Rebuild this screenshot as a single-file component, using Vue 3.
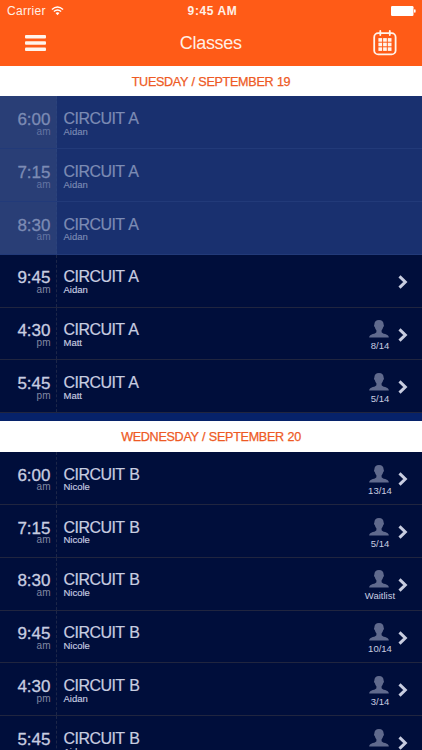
<template>
  <div class="screen">
    <header class="topbar">
      <div class="status">
        <div class="carrier">
          <span>Carrier</span>
          <svg class="wifi" viewBox="0 0 14 10" width="13" height="9.5">
            <path d="M1 3.6 Q7 -1.6 13 3.6" />
            <path d="M3.1 5.9 Q7 2.4 10.9 5.9" />
            <path class="dot" d="M4.9 7.5 Q7 5.7 9.1 7.5 L7 9.8 Z" />
          </svg>
        </div>
        <span class="clock">9:45 AM</span>
        <svg class="battery" viewBox="0 0 25 10" width="25" height="10">
          <rect x="0" y="0" width="22.5" height="10" rx="1.2" />
          <rect x="23" y="3.2" width="1.6" height="3.6" rx="0.8" />
        </svg>
      </div>
      <nav class="nav">
        <button class="icon-button" aria-label="Menu">
          <svg viewBox="0 0 21 16" width="21" height="16">
            <rect y="0" width="21" height="3.5" rx="1" />
            <rect y="6.2" width="21" height="3.5" rx="1" />
            <rect y="12.4" width="21" height="3.5" rx="1" />
          </svg>
        </button>
        <h1 class="title">Classes</h1>
        <button class="icon-button" aria-label="Calendar">
          <svg viewBox="0 0 24 26" width="24" height="26">
            <rect class="frame" x="1.2" y="3.2" width="21.4" height="21.2" rx="4" />
            <path class="pin" d="M7.3 0.9V5M16.8 0.9V5" />
            <template v-for="r in 3" :key="r">
              <rect
                v-for="c in 3"
                :key="c"
                :x="5.4 + (c - 1) * 4.7"
                :y="8.1 + (r - 1) * 4.6"
                width="3.7"
                height="3.6"
              />
            </template>
          </svg>
        </button>
      </nav>
    </header>

    <section v-for="day in days" :key="day.label" class="day">
      <h2 class="day-label">{{ day.label }}</h2>
      <div
        v-for="item in day.classes"
        :key="item.time"
        class="row"
        :class="{ past: item.past }"
      >
        <div class="when">
          <span class="time">{{ item.time }}</span>
          <span class="period">{{ item.period }}</span>
        </div>
        <div class="info">
          <span class="name">{{ item.name }}</span>
          <span class="coach">{{ item.coach }}</span>
        </div>
        <div v-if="item.spots" class="spots">
          <svg viewBox="0 0 20 18" width="20" height="18">
            <path
              d="M10 0C7 0 5.2 1.8 5.4 4.6C4.7 4.8 5.1 7 5.9 7.2C6.2 8.7 6.8 9.6 7.4 10.3V12.3C6.6 13.7 4.2 13.8 2.2 14.7C.7 15.4 .3 16.2 .2 17.4H19.8C19.7 16.2 19.3 15.4 17.8 14.7C15.8 13.8 13.4 13.7 12.6 12.3V10.3C13.2 9.6 13.8 8.7 14.1 7.2C14.9 7 15.3 4.8 14.6 4.6C14.8 1.8 13 0 10 0Z"
            />
          </svg>
          <span>{{ item.spots }}</span>
        </div>
        <svg v-if="!item.past" class="chevron" viewBox="0 0 10 14" width="10" height="14">
          <path d="M1.5 1.4L7.3 7L1.5 12.6" />
        </svg>
      </div>
    </section>
  </div>
</template>

<script setup>
const makeClass = (time, period, name, coach, spots = '', past = false) => ({
  time,
  period,
  name,
  coach,
  spots,
  past
})

const days = [
  {
    label: 'TUESDAY / SEPTEMBER 19',
    classes: [
      makeClass('6:00', 'am', 'CIRCUIT A', 'Aidan', '', true),
      makeClass('7:15', 'am', 'CIRCUIT A', 'Aidan', '', true),
      makeClass('8:30', 'am', 'CIRCUIT A', 'Aidan', '', true),
      makeClass('9:45', 'am', 'CIRCUIT A', 'Aidan'),
      makeClass('4:30', 'pm', 'CIRCUIT A', 'Matt', '8/14'),
      makeClass('5:45', 'pm', 'CIRCUIT A', 'Matt', '5/14')
    ]
  },
  {
    label: 'WEDNESDAY / SEPTEMBER 20',
    classes: [
      makeClass('6:00', 'am', 'CIRCUIT B', 'Nicole', '13/14'),
      makeClass('7:15', 'am', 'CIRCUIT B', 'Nicole', '5/14'),
      makeClass('8:30', 'am', 'CIRCUIT B', 'Nicole', 'Waitlist'),
      makeClass('9:45', 'am', 'CIRCUIT B', 'Nicole', '10/14'),
      makeClass('4:30', 'pm', 'CIRCUIT B', 'Aidan', '3/14'),
      // the spots count of this one is below the fold
      makeClass('5:45', '', 'CIRCUIT B', 'Aidan', ' ')
    ]
  }
]
</script>

<style>
body {
  margin: 0;
  overflow: hidden;
}
</style>

<style scoped>
.screen {
  height: 750px;
  overflow: hidden;
  background: #06226a;
  font-family: "Liberation Sans", Arial, sans-serif;
}

.topbar {
  box-sizing: border-box;
  height: 65.5px;
  background: #ff5b17;
  color: #fff;
}

.status {
  box-sizing: border-box;
  display: grid;
  grid-template-columns: 1fr auto 1fr;
  align-items: center;
  height: 22px;
  padding: 0 6px 0 7px;
  color: #fff0e6;
  font-size: 12px;
}

.carrier {
  display: flex;
  align-items: center;
  gap: 5px;
  letter-spacing: 0.3px;
}

.wifi path {
  fill: none;
  stroke: #fff;
  stroke-width: 1.5;
}

.wifi .dot {
  fill: #fff;
  stroke: none;
}

.clock {
  padding-left: 2px;
  font-weight: bold;
  letter-spacing: 0.6px;
}

.battery {
  justify-self: end;
  fill: #fff;
}

.nav {
  display: flex;
  align-items: center;
  justify-content: space-between;
  height: 42px;
  padding: 0 24.5px 0 25px;
}

.icon-button {
  display: flex;
  padding: 0;
  border: none;
  background: none;
  fill: #fff4ec;
}

.frame,
.pin {
  fill: none;
  stroke: #fff4ec;
  stroke-width: 1.8;
  stroke-linecap: round;
}

.title {
  margin: 0;
  padding: 1px 0 0 2px;
  color: #fff0e6;
  font-size: 18px;
  font-weight: normal;
  letter-spacing: -0.3px;
}

.day {
  margin-bottom: 8px;
}

.day-label {
  height: 30.5px;
  margin: 0;
  background: #fff;
  color: #ee5a24;
  font-size: 12.6px;
  font-weight: normal;
  line-height: 32px;
  text-align: center;
  letter-spacing: -0.3px;
  word-spacing: 0.4px;
  -webkit-text-stroke: 0.25px;
}

.row {
  box-sizing: border-box;
  display: flex;
  height: 52.9px;
  padding-right: 14px;
  border-bottom: 1px solid #20253f;
  background: #000e3b;
  color: #c8cde0;
}

.when {
  box-sizing: border-box;
  display: flex;
  flex-direction: column;
  align-items: flex-end;
  width: 57px;
  padding: 14.8px 5.5px 0 0;
  border-right: 1px dashed #1c2648;
}

.time {
  font-size: 17px;
  line-height: 18px;
  -webkit-text-stroke: 0.3px;
}

.period {
  color: #8188a3;
  font-size: 10px;
  line-height: 10px;
  margin-top: -2.2px;
}

.info {
  display: flex;
  flex: 1;
  flex-direction: column;
  padding: 13.8px 0 0 6.5px;
}

.name {
  font-size: 16px;
  line-height: 18px;
  letter-spacing: -0.55px;
  word-spacing: 1px;
  -webkit-text-stroke: 0.2px;
}

.coach {
  font-size: 9.5px;
  line-height: 10px;
  margin-top: -1.2px;
  -webkit-text-stroke: 0.15px;
}

.spots {
  display: flex;
  flex-direction: column;
  align-items: center;
  width: 40px;
  padding-top: 12.8px;
  font-size: 9.5px;
  line-height: 15px;
  white-space: nowrap;
}

.spots svg {
  fill: #606a8d;
}

.spots span {
  padding-left: 2px;
}

.chevron {
  margin-top: 20px;
}

.spots + .chevron {
  margin-left: -1px;
}

.chevron path {
  fill: none;
  stroke: #c8cde0;
  stroke-width: 3;
}

.past {
  border-bottom-color: #223a79;
  background: #19306f;
  color: #7c8bb4;
}

.past .when {
  border-right-color: #2b427b;
  background: #293e76;
}

.past .period {
  color: #6374a3;
}
</style>
